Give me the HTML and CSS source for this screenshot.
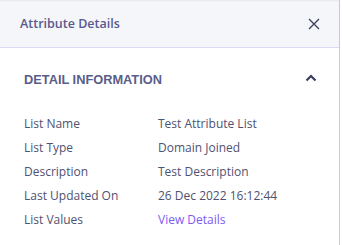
FILE: index.html
```html
<!DOCTYPE html>
<html lang="en">
<head>
    <meta charset="UTF-8">
    <meta name="viewport" content="width=device-width, initial-scale=1.0">
    <title>Attribute Details</title>
    <link rel="stylesheet" href="styles.css">
</head>
<body>
    <div class="panel">
        <div class="panel-header">
            <span class="panel-title">Attribute Details</span>
            <button type="button" class="close-btn" aria-label="Close">
                <svg width="12" height="12" viewBox="0 0 12 12">
                    <path d="M1 1L11 11M11 1L1 11" stroke="#3d4160" stroke-width="1.4" fill="none"/>
                </svg>
            </button>
        </div>
        <div class="section">
            <div class="section-head">
                <span class="section-title">DETAIL INFORMATION</span>
                <svg class="chevron" width="12" height="8" viewBox="0 0 12 8">
                    <path d="M1.5 6.5L6 2L10.5 6.5" stroke="#3a3d5c" stroke-width="2.2" fill="none"/>
                </svg>
            </div>
            <div class="details">
                <div class="label">List Name</div>
                <div class="value">Test Attribute List</div>
                <div class="label">List Type</div>
                <div class="value">Domain Joined</div>
                <div class="label">Description</div>
                <div class="value">Test Description</div>
                <div class="label">Last Updated On</div>
                <div class="value">26 Dec 2022 16:12:44</div>
                <div class="label">List Values</div>
                <div class="value"><a href="#" class="link">View Details</a></div>
            </div>
        </div>
    </div>
</body>
</html>
```

FILE: styles.css
```css
body {
    margin: 0;
    background: #fff;
    font-family: "Open Sans", sans-serif;
}
.panel {
    width: 339px;
    height: 245px;
    border-right: 1px solid #c9cad0;
    background: #fff;
}
.panel-header {
    height: 47px;
    display: flex;
    align-items: center;
    justify-content: space-between;
    padding: 0 19px 0 20px;
    background: #f5f6f9;
    border-bottom: 1px solid #dcdaf5;
    box-shadow: inset 0 2px 2px -1px rgba(0, 0, 0, 0.06);
}
.panel-title {
    font-size: 12.5px;
    font-weight: 600;
    color: #575a8e;
}
.close-btn {
    border: none;
    background: none;
    padding: 0;
    width: 12px;
    height: 12px;
    display: flex;
}
.section {
    padding: 0 24px;
}
.section-head {
    height: 62px;
    display: flex;
    align-items: center;
    justify-content: space-between;
}
.section-title {
    font-family: "Liberation Sans", Arial, sans-serif;
    font-weight: bold;
    font-size: 12.8px;
    color: #5a5d8a;
}
.chevron {
    margin-right: -2px;
    margin-top: -3px;
}
.details {
    display: grid;
    grid-template-columns: 134px 1fr;
    row-gap: 6px;
    padding-top: 5px;
    font-size: 12px;
    line-height: 18px;
    color: #4f5170;
}
.link {
    color: #7a5cf2;
    text-decoration: none;
}
```
